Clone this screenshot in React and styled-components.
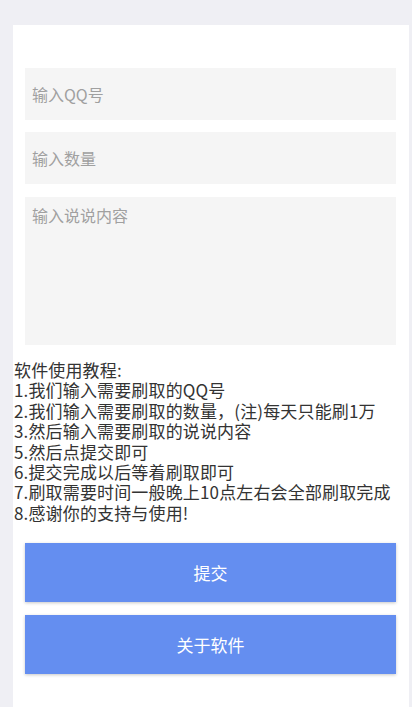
import React from 'react'
import styled, { createGlobalStyle } from 'styled-components'

const GlobalStyle = createGlobalStyle`
  html, body {
    margin: 0;
    padding: 0;
    background: #efeff4;
  }
  * {
    box-sizing: border-box;
  }
  body {
    font-family: "Noto Sans CJK SC", "Noto Sans", sans-serif;
  }
`

const Page = styled.div`
  min-height: 707px;
  padding: 25px 3px 0 13px;
`

const Card = styled.div`
  background: #ffffff;
  min-height: 682px;
  padding-top: 43px;
  display: flex;
  flex-direction: column;
`

const fieldStyle = `
  display: block;
  margin: 0 13px 0 12px;
  border: none;
  outline: none;
  background: #f5f5f5;
  font-family: "Noto Sans CJK SC", "Noto Sans", sans-serif;
  font-size: 16px;
  color: #333;
  padding: 0 7px;
  &::placeholder {
    color: #a0a0a0;
  }
`

const Input = styled.input`
  ${fieldStyle}
  height: 52px;
  margin-bottom: ${(p) => p.$gap}px;
`

const TextArea = styled.textarea`
  ${fieldStyle}
  height: 148px;
  resize: none;
  padding-top: 8px;
  line-height: 20px;
`

const Tutorial = styled.div`
  margin-top: 15px;
  padding-left: 1px;
  font-size: 17px;
  line-height: 20.4px;
  letter-spacing: 0.15px;
  color: #333;
  white-space: nowrap;
`

const Step = styled.div`
  height: 20.4px;
`

const Buttons = styled.div`
  display: flex;
  flex-direction: column;
  gap: 13px;
  margin: 20px 13px 0 12px;
`

const Button = styled.button`
  height: 59px;
  border: none;
  background: #648ef0;
  color: #ffffff;
  font-family: "Noto Sans CJK SC", "Noto Sans", sans-serif;
  font-size: 17px;
  box-shadow: 0 1px 3px rgba(0, 0, 0, 0.22);
  cursor: pointer;
`

const steps = [
  '软件使用教程:',
  '1.我们输入需要刷取的QQ号',
  '2.我们输入需要刷取的数量，(注)每天只能刷1万',
  '3.然后输入需要刷取的说说内容',
  '5.然后点提交即可',
  '6.提交完成以后等着刷取即可',
  '7.刷取需要时间一般晚上10点左右会全部刷取完成',
  '8.感谢你的支持与使用!',
]

export default function App() {
  return (
    <>
      <GlobalStyle />
      <Page>
        <Card>
          <Input placeholder="输入QQ号" $gap={12} />
          <Input placeholder="输入数量" $gap={13} />
          <TextArea placeholder="输入说说内容" />
          <Tutorial>
            {steps.map((s) => (
              <Step key={s}>{s}</Step>
            ))}
          </Tutorial>
          <Buttons>
            <Button>提交</Button>
            <Button>关于软件</Button>
          </Buttons>
        </Card>
      </Page>
    </>
  )
}
